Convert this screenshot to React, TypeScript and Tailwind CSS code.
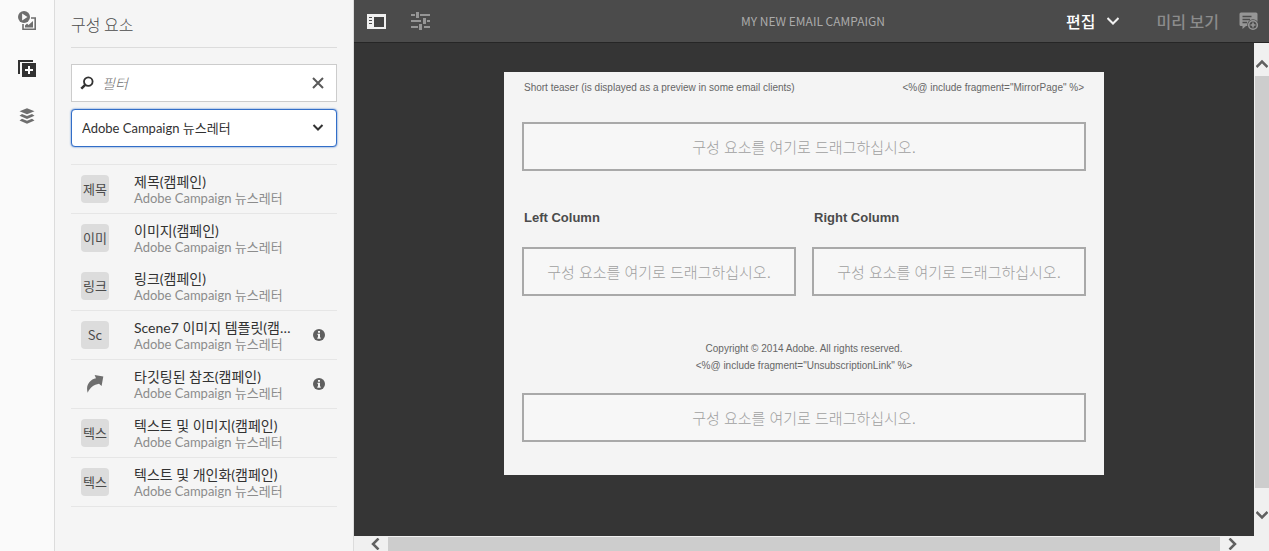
import React from "react";

const SOURCE = "Adobe Campaign 뉴스레터";

type Item = { title: string; badge?: string; info?: boolean; joined?: boolean };

const items: Item[] = [
  { title: "제목(캠페인)", badge: "제목" },
  { title: "이미지(캠페인)", badge: "이미" },
  { title: "링크(캠페인)", badge: "링크", joined: true },
  { title: "Scene7 이미지 템플릿(캠페인)", badge: "Sc", info: true },
  { title: "타깃팅된 참조(캠페인)", info: true },
  { title: "텍스트 및 이미지(캠페인)", badge: "텍스" },
  { title: "텍스트 및 개인화(캠페인)", badge: "텍스" },
];

function AssetsIcon() {
  return (
    <svg width="20" height="20" viewBox="0 0 20 20" fill="none" aria-hidden="true">
      <path d="M14 8H18.2V19.2H6V14" stroke="#6e6e6e" strokeWidth="1.6" />
      <path d="M8 17.5V15.5L10 13.5L11.5 15L16 11V17.5Z" fill="#6e6e6e" />
      <circle cx="7" cy="7" r="7" fill="#fafafa" />
      <circle cx="7" cy="7" r="6" fill="#6e6e6e" />
      <path d="M5.1 3.6L10.5 7L5.1 10.4Z" fill="#fafafa" />
    </svg>
  );
}

function ComponentsIcon() {
  return (
    <svg width="20" height="20" viewBox="0 0 20 20" fill="none" aria-hidden="true">
      <path d="M2 16V3H16" stroke="#323232" strokeWidth="2" />
      <rect x="5" y="5" width="14" height="14" fill="#323232" />
      <path d="M12 8V16M8 12H16" stroke="#fff" strokeWidth="2" />
    </svg>
  );
}

function LayersIcon() {
  return (
    <svg width="16" height="16" viewBox="0 0 16 16" fill="#6e6e6e" aria-hidden="true">
      <path d="M8 0.3L15.5 3.3L8 6.3L0.5 3.3Z" />
      <path d="M3 6L0.5 7.8L8 11L15.5 7.8L13 6L8 8Z" />
      <path d="M3 10.7L0.5 12.5L8 15.7L15.5 12.5L13 10.7L8 12.7Z" />
    </svg>
  );
}

function SearchIcon() {
  return (
    <svg width="14" height="14" viewBox="0 0 13 13" fill="none" stroke="#323232" aria-hidden="true">
      <circle cx="7.7" cy="5.2" r="4" strokeWidth="1.7" />
      <path d="M4.8 8.2L1.2 11.8" strokeWidth="2.4" />
    </svg>
  );
}

function Chevron({ d, color, width = 2 }: { d: string; color: string; width?: number }) {
  return (
    <svg width="12" height="12" viewBox="0 0 12 12" fill="none" stroke={color} strokeWidth={width} aria-hidden="true">
      <path d={d} />
    </svg>
  );
}

function InfoIcon() {
  return (
    <svg width="12" height="12" viewBox="0 0 12 12" aria-hidden="true">
      <circle cx="6" cy="6" r="6" fill="#5f5f5f" />
      <path d="M5 2H7V3.8H5ZM4.5 4.8H7V8.6H7.7V9.8H4.3V8.6H5V6H4.5Z" fill="#f5f5f5" />
    </svg>
  );
}

function ShareIcon() {
  return (
    <svg width="18" height="18" viewBox="0 0 18 18" fill="#6e6e6e" aria-hidden="true">
      <path d="M8.6 0L17.3 1.6L15.6 11L13 8.8C8 9.8 4 12.4 1.7 17.7C-0.6 10.5 3.6 4.5 10 3.2Z" />
    </svg>
  );
}

function PanelIcon() {
  return (
    <svg width="19" height="15" viewBox="0 0 19 15" fill="none" aria-hidden="true">
      <rect width="19" height="15" fill="#f0f0f0" />
      <rect x="7" y="3" width="10" height="10" fill="#444" />
      <path d="M2 3.5H5M2 6.5H5M2 9.5H5" stroke="#4b4b4b" />
    </svg>
  );
}

function SlidersIcon() {
  return (
    <svg width="19" height="18" viewBox="0 0 19 18" fill="none" stroke="#969696" aria-hidden="true">
      <path d="M0 3H4M9 3H19M0 9H10M16 9H19M0 15H7M13 15H19" strokeWidth="2" />
      <path d="M6.5 0V6M13.5 6V12M9.5 12V18" strokeWidth="3" />
    </svg>
  );
}

function NoteIcon() {
  return (
    <svg width="20" height="19" viewBox="0 0 20 19" fill="none" aria-hidden="true">
      <path d="M2 0.5H17A1.5 1.5 0 0 1 18.5 2V12.5A1.5 1.5 0 0 1 17 14H7L3.5 17V14H2A1.5 1.5 0 0 1 0.5 12.5V2A1.5 1.5 0 0 1 2 0.5Z" fill="#969696" />
      <path d="M3.5 4.5H12.5M3.5 7.5H11M3.5 10.5H8" stroke="#4b4b4b" strokeWidth="1.5" />
      <circle cx="14" cy="13" r="5.8" fill="#4b4b4b" />
      <circle cx="14" cy="13" r="4.3" stroke="#969696" strokeWidth="1.6" />
      <path d="M14 10.5V15.5M11.5 13H16.5" stroke="#969696" strokeWidth="1.6" />
    </svg>
  );
}

function DropZone() {
  return (
    <div className="flex h-[49px] min-w-0 flex-1 items-center justify-center border-2 border-[#a9a9a9] bg-[#f7f7f7] pt-0.5 text-[15px] leading-5 font-light text-[#a0a0a0]">
      구성 요소를 여기로 드래그하십시오.
    </div>
  );
}

function Row({ item }: { item: Item }) {
  return (
    <li className={item.joined ? "flex h-12 items-center pl-2.5" : "flex h-[49px] items-center border-t border-[#e6e6e6] pl-2.5"}>
      {item.badge ? (
        <span className="flex size-7 items-center justify-center rounded bg-[#dcdcdc] text-[13px] leading-4 text-[#4b4b4b]">{item.badge}</span>
      ) : (
        <span className="flex size-7 items-center justify-center">
          <ShareIcon />
        </span>
      )}
      <div className="ml-[25px] w-[162px] pt-0.5 font-['Lato','Noto_Sans_CJK_KR',sans-serif]">
        <p className="truncate text-sm leading-4 text-[#323232]">{item.title}</p>
        <p className="text-[13px] leading-4 whitespace-nowrap text-[#8c8c8c]">{SOURCE}</p>
      </div>
      {item.info && (
        <button type="button" aria-label="정보" className="mr-3 ml-auto">
          <InfoIcon />
        </button>
      )}
    </li>
  );
}

export default function App() {
  return (
    <div className="flex h-screen overflow-hidden bg-[#f5f5f5] font-['Noto_Sans_CJK_KR',sans-serif]">
      <nav className="flex w-[55px] shrink-0 flex-col items-center gap-7 border-r border-[#dcdcdc] bg-[#fafafa] pt-2.5">
        <button type="button" aria-label="자산" className="flex size-5 items-center justify-center">
          <AssetsIcon />
        </button>
        <button type="button" aria-label="구성 요소" className="flex size-5 items-center justify-center">
          <ComponentsIcon />
        </button>
        <button type="button" aria-label="콘텐츠 트리" className="flex size-5 items-center justify-center">
          <LayersIcon />
        </button>
      </nav>

      <aside className="w-[299px] shrink-0 border-r border-[#dcdcdc] px-4">
        <h2 className="flex h-12 items-center border-b border-[#dcdcdc] text-base leading-5 font-light text-[#4b4b4b]">구성 요소</h2>
        <div className="mt-4 flex h-[38px] items-center border border-[#cccccc] bg-white pl-2">
          <SearchIcon />
          <input
            aria-label="필터"
            placeholder="필터"
            className="ml-2 h-5 min-w-0 flex-1 text-sm leading-5 font-light italic outline-none placeholder:text-[#6e6e6e]"
          />
          <button type="button" aria-label="지우기" className="mr-3">
            <Chevron d="M1 1L11 11M11 1L1 11" color="#5a5a5a" />
          </button>
        </div>
        <div className="relative mt-[7px]">
          <select
            aria-label="구성 요소 그룹"
            className="block h-[38px] w-full appearance-none rounded border border-[#326ec8] bg-white pt-0.5 pr-8 pl-2.5 font-['Lato','Noto_Sans_CJK_KR',sans-serif] text-[13px] text-[#323232] shadow-[0_0_2px_#326ec8] outline-none"
          >
            <option>{SOURCE}</option>
          </select>
          <span className="pointer-events-none absolute inset-y-0 right-[13px] flex items-center">
            <Chevron d="M1.5 3L6 7.5L10.5 3" color="#323232" />
          </span>
        </div>
        <ul className="mt-[17px] border-b border-[#e6e6e6]">
          {items.map((item) => (
            <Row key={item.title} item={item} />
          ))}
        </ul>
      </aside>

      <div className="flex min-w-0 flex-1 flex-col">
        <header className="flex h-[43px] shrink-0 items-center border-b border-[#262626] bg-[#4b4b4b] pr-2.5 pl-[13px]">
          <div className="flex flex-1 items-center gap-[25px]">
            <button type="button" aria-label="사이드 패널 전환">
              <PanelIcon />
            </button>
            <button type="button" aria-label="페이지 정보">
              <SlidersIcon />
            </button>
          </div>
          <h1 className="text-xs leading-4 text-[#aaaaaa]">MY NEW EMAIL CAMPAIGN</h1>
          <div className="flex flex-1 items-center justify-end">
            <button type="button" className="flex items-center gap-[11px] text-base leading-5 font-medium text-white">
              편집
              <Chevron d="M0.5 3L6 8.5L11.5 3" color="#f0f0f0" width={2} />
            </button>
            <button type="button" className="ml-[38px] text-base leading-5 font-medium text-[#8c8c8c]">
              미리 보기
            </button>
            <button type="button" aria-label="주석" className="ml-5">
              <NoteIcon />
            </button>
          </div>
        </header>

        <div className="flex min-h-0 flex-1">
          <main className="min-w-0 flex-1 overflow-hidden bg-[#353535] pt-[29px]">
            <article className="mx-auto w-full max-w-[600px] bg-[#f4f4f4] px-[18px] pt-2 pb-[33px] font-['Liberation_Sans','Noto_Sans_CJK_KR',sans-serif] text-[#666]">
              <div className="flex justify-between px-0.5 text-[10px] leading-4">
                <p>Short teaser (is displayed as a preview in some email clients)</p>
                <p>&lt;%@ include fragment="MirrorPage" %&gt;</p>
              </div>
              <div className="mt-[26px] flex">
                <DropZone />
              </div>
              <div className="mt-[37px] grid grid-cols-2 gap-4">
                {["Left Column", "Right Column"].map((name) => (
                  <section key={name} className="flex flex-col">
                    <h3 className="px-0.5 text-[13px] leading-5 font-bold text-[#4b4b4b]">{name}</h3>
                    <div className="mt-[19px] flex">
                      <DropZone />
                    </div>
                  </section>
                ))}
              </div>
              <footer className="mt-11 text-center text-[10px] leading-[17px]">
                <p>Copyright © 2014 Adobe. All rights reserved.</p>
                <p>&lt;%@ include fragment="UnsubscriptionLink" %&gt;</p>
              </footer>
              <div className="mt-[19px] flex">
                <DropZone />
              </div>
            </article>
          </main>
          <div className="flex w-[15px] shrink-0 flex-col items-center bg-[#f0f0f0] pl-px">
            <button type="button" aria-label="위로" className="flex h-[33px] items-center pt-2">
              <Chevron d="M0.5 9L6 3.5L11.5 9" color="#606060" width={2.5} />
            </button>
            <div className="mb-3 w-full flex-1 bg-[#cdcdcd]" />
            <button type="button" aria-label="아래로" className="flex h-9 items-center pb-1.5">
              <Chevron d="M0.5 3L6 8.5L11.5 3" color="#606060" width={2.5} />
            </button>
          </div>
        </div>
        <div className="flex h-[15px] shrink-0 bg-[#f0f0f0] pt-px pr-[15px]">
          <button type="button" aria-label="왼쪽으로" className="flex w-[34px] items-center justify-center pl-2.5">
            <Chevron d="M8.5 0.5L3 6L8.5 11.5" color="#606060" width={2.5} />
          </button>
          <div className="flex-1 bg-[#cdcdcd]" />
          <button type="button" aria-label="오른쪽으로" className="flex w-[34px] items-center justify-center pr-2.5">
            <Chevron d="M3.5 0.5L9 6L3.5 11.5" color="#606060" width={2.5} />
          </button>
        </div>
      </div>
    </div>
  );
}
